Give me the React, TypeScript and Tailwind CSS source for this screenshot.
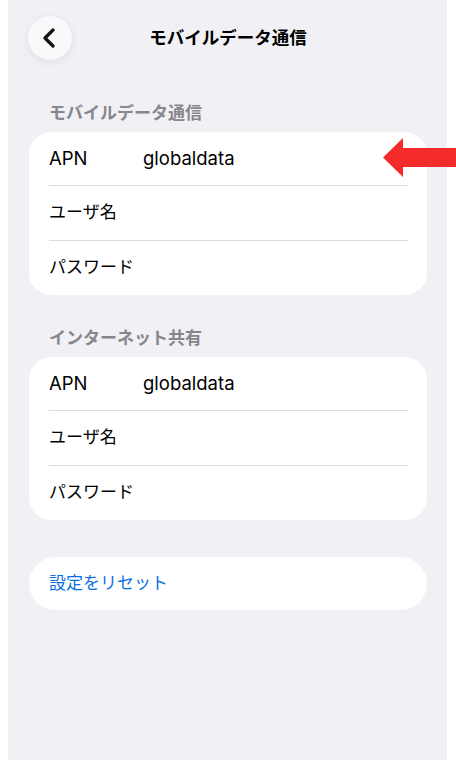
import React from 'react';

const font = { fontFamily: 'Inter, "Noto Sans CJK JP", sans-serif' };

const Row: React.FC<{ label: string; value?: string; h: string; last?: boolean }> = ({ label, value, h, last }) => (
  <div className={`flex ${h} items-center ${last ? '' : 'border-b border-[#dedee2]'}`}>
    <span className={`w-[94px] text-black ${value ? 'text-[18.5px]' : 'text-[17px]'}`}>{label}</span>
    {value && <span className="text-[18.5px] text-black">{value}</span>}
  </div>
);

const Section: React.FC<{ title: string; mt: string }> = ({ title, mt }) => (
  <>
    <div className={`${mt} mb-[9px] px-[20px] text-[17px] leading-[20px] font-semibold text-[#86868b]`}>
      {title}
    </div>
    <div className="rounded-[22px] bg-white pl-[20px] pr-[19px]">
      <Row label="APN" value="globaldata" h="h-[54px]" />
      <Row label="ユーザ名" h="h-[55px]" />
      <Row label="パスワード" h="h-[54px]" last />
    </div>
  </>
);

export default function App() {
  return (
    <div className="relative flex h-[760px] w-[456px] bg-white pl-[8px] pr-[9px]" style={font}>
      <div className="flex-1 bg-[#f0f0f5] pl-[21px] pr-[20px] pt-[16px]">
        <div className="relative flex h-[44px] items-center justify-center">
          <button className="absolute left-[-1px] top-0 flex h-[44px] w-[44px] items-center justify-center rounded-full bg-[#f9f9fb] shadow-[0_2px_10px_rgba(0,0,0,0.08)]">
            <svg width="16" height="20" viewBox="0 0 16 20" fill="none">
              <path d="M11 2 L3 10 L11 18" stroke="#111" strokeWidth="3.2" strokeLinecap="round" strokeLinejoin="round" />
            </svg>
          </button>
          <h1 className="text-[17.5px] font-bold text-black">モバイルデータ通信</h1>
        </div>

        <Section title="モバイルデータ通信" mt="mt-[43px]" />
        <Section title="インターネット共有" mt="mt-[33px]" />

        <div className="mt-[37px] flex h-[53px] items-center rounded-[27px] bg-white px-[20px]">
          <span className="text-[17px] text-[#0a6fe4]">設定をリセット</span>
        </div>
      </div>

      <svg className="absolute left-[383px] top-[138px]" width="73" height="40" viewBox="0 0 73 40">
        <polygon points="0,19.5 20,0 20,10 73,10 73,29 20,29 20,39" fill="#f52b2b" />
      </svg>
    </div>
  );
}
